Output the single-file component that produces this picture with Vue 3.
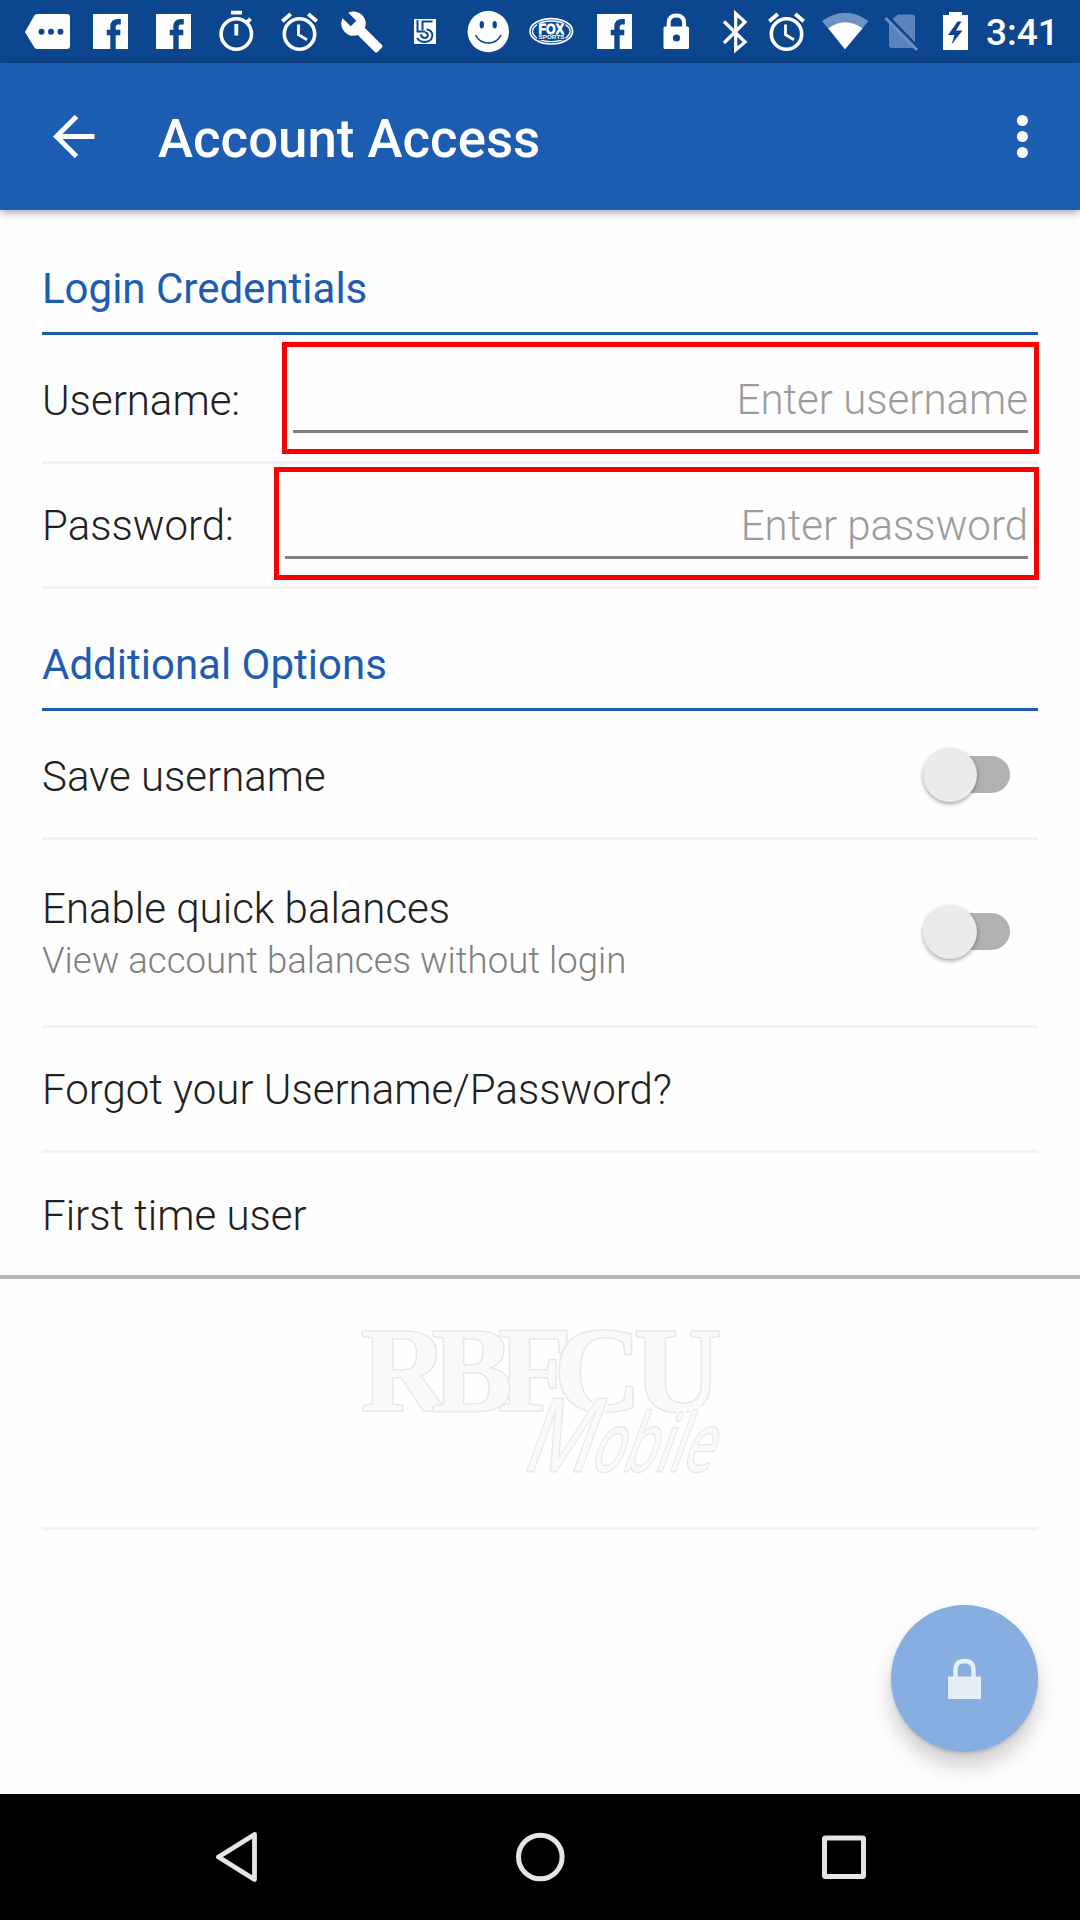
<script setup>
import { ref } from 'vue'

const username = ref('')
const password = ref('')
</script>

<template>
  <div class="screen">
    <header class="status">
      <svg viewBox="20 0 60 63" width="60" height="63">
        <path d="M37 14H67q3 0 3 3V46q0 3-3 3H37q-2 0-3-2L25 32l9-16q1-2 3-2z" fill="#fff" />
        <g fill="#0c468f"><circle cx="41.5" cy="31.7" r="3" /><circle cx="51" cy="31.7" r="3" /><circle cx="60.5" cy="31.7" r="3" /></g>
      </svg>
      <svg viewBox="80 0 62 63" width="62" height="63">
        <path d="M93 14h35v35H93z" fill="#fff" />
        <path d="M113 49V27q0-5.300 5-5.300h2.800M106.700 32.500h13.600" fill="none" stroke="#0c468f" stroke-width="5.400" />
      </svg>
      <svg viewBox="79 0 63 63" width="63" height="63">
        <path d="M93 14h35v35H93z" fill="#fff" />
        <path d="M113 49V27q0-5.300 5-5.300h2.800M106.700 32.500h13.600" fill="none" stroke="#0c468f" stroke-width="5.400" />
      </svg>
      <svg viewBox="205 0 63 63" width="63" height="63" fill="none" stroke="#fff">
        <circle cx="236.300" cy="34" r="15.200" stroke-width="3.600" />
        <path d="M231 12.700h11M236.300 24v11.500M246.500 23l4-4.300" stroke-width="3.800" />
      </svg>
      <svg viewBox="268 0 62 63" width="62" height="63" fill="none" stroke="#fff">
        <circle cx="299.500" cy="34" r="15.200" stroke-width="3.600" />
        <path d="M282.300 21.300l8.500-7.300M316.700 21.300l-8.500-7.300" stroke-width="3.800" />
        <path d="M298.500 24.500v10.300l8.500 5" stroke-width="2.800" />
      </svg>
      <svg viewBox="330 0 70 63" width="70" height="63">
        <path transform="translate(339.500 9.500) scale(1.870)" d="M22.700 19l-9.100-9.100c.9-2.300.4-5-1.500-6.900-2-2-5-2.400-7.400-1.300L9 6 6 9 1.600 4.700C.4 7.100.9 10.100 2.900 12.100c1.900 1.900 4.600 2.400 6.900 1.500l9.100 9.100c.4.4 1 .4 1.400 0l2.300-2.300c.5-.4.5-1.100.1-1.400z" fill="#fff" />
      </svg>
      <svg viewBox="400 0 50 63" width="50" height="63">
        <path d="M414 19h22v25h-22z" fill="#fff" />
        <path d="M432.500 21.500h-10v8.500M417.500 20v11.500h7.500M417 38q2.500 4 8 4c9 0 10-12 1.500-12.500M420.500 34.500q1.500 3.500 4 3.500c5 0 4-6 .3-5.500" fill="none" stroke="#0c468f" stroke-width="2" />
      </svg>
      <svg viewBox="450 0 70 63" width="70" height="63">
        <circle cx="488.300" cy="31.500" r="20.700" fill="#fff" />
        <g fill="#0c468f"><ellipse cx="481.800" cy="24.700" rx="2.200" ry="3.700" /><ellipse cx="494.700" cy="24.700" rx="2.200" ry="3.700" /></g>
        <path d="M475.500 35q4 8 12.800 8t12.800-8" fill="none" stroke="#0c468f" stroke-width="1.600" />
      </svg>
      <svg viewBox="520 0 65 63" width="65" height="63">
        <ellipse cx="551.300" cy="31.300" rx="21.300" ry="12.700" fill="none" stroke="#fff" stroke-width="1.700" />
        <ellipse cx="551.300" cy="31.300" rx="18.800" ry="10.300" fill="none" stroke="#fff" stroke-width="1.400" />
        <path d="M537 23.500h28.500v16.500h-28.500z" fill="#0c468f" />
        <text x="538.5" y="34" class="fox" font-size="15.500" textLength="25.500" lengthAdjust="spacingAndGlyphs">FOX</text>
        <text x="538.5" y="39" class="sports" font-size="5" textLength="26" lengthAdjust="spacingAndGlyphs">SPORTS</text>
      </svg>
      <svg viewBox="81 0 60 63" width="60" height="63">
        <path d="M93 14h35v35H93z" fill="#fff" />
        <path d="M113 49V27q0-5.300 5-5.300h2.800M106.700 32.500h13.600" fill="none" stroke="#0c468f" stroke-width="5.400" />
      </svg>
      <svg viewBox="645 0 60 63" width="60" height="63">
        <rect x="663.500" y="26.500" width="25.500" height="22.500" rx="1.500" fill="#fff" />
        <path d="M668.700 28v-5q0-7.500 7.700-7.500t7.700 7.500v5" fill="none" stroke="#fff" stroke-width="4" />
        <circle cx="676.500" cy="38" r="3.600" fill="#0c468f" />
      </svg>
      <svg viewBox="705 0 50 63" width="50" height="63">
        <path d="M724 21.500l21 20.500-9.300 8V13.500L745 22 724 43" fill="none" stroke="#fff" stroke-width="3.300" />
      </svg>
      <svg viewBox="755 0 60 63" width="60" height="63" fill="none" stroke="#fff">
        <circle cx="786.500" cy="34" r="15.200" stroke-width="3.600" />
        <path d="M769.300 21.300l8.500-7.300M803.700 21.300l-8.500-7.300" stroke-width="3.800" />
        <path d="M785.500 24.500v10.300l8.500 5" stroke-width="2.800" />
      </svg>
      <svg viewBox="815 0 60 63" width="60" height="63">
        <path d="M845 49.300L822 21q23-16.500 46.500 0z" fill="#6d91c2" />
        <path d="M845 49.300L828.300 28.300q16.700-12 34.200 0z" fill="#fff" />
      </svg>
      <svg viewBox="875 0 55 63" width="55" height="63">
        <path d="M898 14.500h14q3 0 3 3V48H892q-3 0-3-3V22z" fill="#5b84bd" />
        <path d="M888 16.500l31 32" stroke="#0c468f" stroke-width="3" />
        <path d="M885.500 18l31.500 32" stroke="#6d91c2" stroke-width="3" />
      </svg>
      <svg viewBox="930 0 50 63" width="50" height="63">
        <path d="M943 15h6v-3h13v3h6v35h-25z" fill="#fff" />
        <path d="M957.500 21.500l-9.500 13.500h6.500l-3 9.500 11-14h-6.500l5.500-9z" fill="#0c468f" />
      </svg>
      <span class="time">3:41</span>
    </header>

    <div class="appbar">
      <svg class="back" viewBox="0 0 48 50" width="48" height="50" fill="none" stroke="#fff" stroke-width="5">
        <path d="M45.500 24.500H9M27.500 4.500L7.500 24.500l20 20" />
      </svg>
      <h1>Account Access</h1>
      <svg class="more" viewBox="0 0 12 44" width="12" height="44" fill="#fff">
        <circle cx="6.400" cy="5.500" r="5.500" /><circle cx="6.400" cy="21.500" r="5.500" /><circle cx="6.400" cy="37.500" r="5.500" />
      </svg>
    </div>

    <main>
      <h2><span class="login">Login Credentials</span></h2>
      <div class="row field first">
        <label for="user">Username:</label>
        <div class="box user"><input id="user" v-model="username" placeholder="Enter username" /></div>
      </div>
      <div class="row field second">
        <label for="pass">Password:</label>
        <div class="box pass"><input id="pass" v-model="password" type="password" placeholder="Enter password" /></div>
      </div>
      <h2 class="more-options"><span>Additional Options</span></h2>
      <div class="row save">
        <span>Save username</span>
        <div class="toggle"><i></i></div>
      </div>
      <div class="row quick">
        <div class="lines">
          <span>Enable quick balances</span>
          <small>View account balances without login</small>
        </div>
        <div class="toggle"><i></i></div>
      </div>
      <div class="row link"><span>Forgot your Username/Password?</span></div>
      <div class="row link last"><span>First time user</span></div>
    </main>

    <section class="brand">
      <svg viewBox="340 1279 400 248" width="400" height="248">
        <text class="mark" x="361 432 498 554 634" y="1411" font-size="121">RBFCU</text>
        <text class="script halo" transform="translate(520 1471) skewX(-20)" x="0" y="0"><tspan class="cap" textLength="68" lengthAdjust="spacingAndGlyphs">M</tspan><tspan class="rest" textLength="122" lengthAdjust="spacingAndGlyphs">obile</tspan></text>
        <text class="script" transform="translate(520 1471) skewX(-20)" x="0" y="0"><tspan class="cap" textLength="68" lengthAdjust="spacingAndGlyphs">M</tspan><tspan class="rest" textLength="122" lengthAdjust="spacingAndGlyphs">obile</tspan></text>
      </svg>
    </section>

    <div class="space">
      <button class="fab" aria-label="Log in">
        <svg viewBox="0 0 34 42" width="34" height="42">
          <path d="M0 18.500h33v22.500H0z" fill="#e6eef8" />
          <path d="M7.500 20v-8q0-9 9-9t9 9v8" fill="none" stroke="#e6eef8" stroke-width="4.400" />
        </svg>
      </button>
    </div>

    <nav>
      <svg viewBox="0.500 0 50 56" width="50" height="56"><path d="M42 5.500v45L6 28z" fill="none" stroke="#e6e6e6" stroke-width="4.800" stroke-linejoin="round" /></svg>
      <svg viewBox="0.700 0 56 56" width="56" height="56"><circle cx="28" cy="28" r="21.800" fill="none" stroke="#e6e6e6" stroke-width="5" /></svg>
      <svg viewBox="0 0 50 56" width="50" height="56"><rect x="5.500" y="9" width="39" height="38.500" rx="1" fill="none" stroke="#e6e6e6" stroke-width="5" /></svg>
    </nav>
  </div>
</template>

<style>
body { margin: 0; background: #fefefe; }
</style>

<style scoped>
.screen {
  width: 1080px;
  height: 1920px;
  display: flex;
  flex-direction: column;
  overflow: hidden;
  background: #fefefe;
  color: #212121;
  font-family: Roboto, sans-serif;
  font-size: 42px;
  font-weight: 300;
}
.screen > * { flex: none; box-sizing: border-box; }
.status { height: 63px; padding-left: 20px; display: flex; background: #0c468f; }
.status svg { flex: none; display: block; }
.time { margin-left: 6px; color: #fff; font-size: 37px; line-height: 65px; font-weight: 500; }
.fox, .sports { fill: #fff; font-family: "Liberation Sans", sans-serif; font-weight: 700; }
.fox { stroke: #fff; stroke-width: .8px; }
.appbar {
  height: 147px;
  display: flex;
  align-items: center;
  padding: 0 52px 0 49px;
  background: #1c5db1;
  box-shadow: 0 2px 9px rgba(0, 0, 0, .4);
  z-index: 1;
}
h1 { margin: 4px auto 0 61px; color: #fff; font-size: 52.800px; line-height: 60px; font-weight: 500; }
main { padding: 0 42px; height: 1069px; border-bottom: 4px solid #b4b6b5; }
h2 {
  margin: 0;
  height: 125px;
  box-sizing: border-box;
  padding-top: 54px;
  border-bottom: 3px solid #1c5db1;
  color: #1c5db1;
  font-size: 42px;
  line-height: 49px;
  font-weight: 400;
}
.row {
  height: 129px;
  box-sizing: border-box;
  display: flex;
  align-items: center;
  justify-content: space-between;
  border-bottom: 3px solid #f3f3f3;
  line-height: 50px;
}
.first label { padding-top: 6px; }
.second { height: 125px; align-items: flex-start; padding-top: 3px; }
.second label { padding-top: 34px; }
.box {
  box-sizing: border-box;
  height: 112px;
  margin-right: -1px;
  padding: 29px 6px 0;
  border: 5px solid #fb0000;
}
.user { width: 757px; }
.pass { width: 765px; height: 113px; }
.pass input { height: 58px; }
input {
  display: block;
  box-sizing: border-box;
  width: 100%;
  height: 57px;
  padding: 0 0 7px;
  border: 0;
  border-bottom: 3px solid #808080;
  outline: 0;
  background: none;
  text-align: right;
  font: 300 42px/46px Roboto, sans-serif;
}
input::placeholder { color: #9c9c9c; opacity: 1; }
.more-options { height: 122px; padding-top: 51px; }
.save > span { padding-top: 5px; }
.quick { height: 188px; }
.lines { display: flex; flex-direction: column; padding-top: 5px; }
small { color: #808080; font-size: 36.600px; line-height: 53px; }
.link { height: 125px; }
.link:not(.last) > span { padding-top: 2px; }
.last { border: 0; }
.toggle {
  width: 73px;
  height: 37px;
  margin-right: 28.500px;
  border-radius: 19px;
  background: #b1b1b1;
  display: flex;
  align-items: center;
}
.save .toggle { margin-top: 1px; }
.quick .toggle { margin-bottom: 2px; }
.toggle i {
  flex: none;
  width: 54px;
  height: 54px;
  margin-left: -14px;
  border-radius: 50%;
  background: #ebebeb;
  box-shadow: 0 2px 4px rgba(0, 0, 0, .35);
}
.brand { height: 251px; margin: 0 42px; border-bottom: 3px solid #f2f2f2; display: flex; justify-content: center; }
.brand svg { overflow: visible; }
.mark, .script { fill: #f9f9f9; stroke: #e7e7e7; stroke-width: 3px; paint-order: stroke; stroke-linejoin: round; }
.mark { font-family: "Liberation Serif", serif; font-weight: 700; }
.script { font-family: "Open Sans", sans-serif; font-weight: 400; }
.cap { font-size: 101px; }
.rest { font-size: 80px; }
.halo { stroke: #fefefe; stroke-width: 8px; }
.space { height: 264px; display: flex; justify-content: flex-end; padding: 75px 42px 0 0; }
.fab {
  width: 147px;
  height: 147px;
  padding: 0;
  border: 0;
  border-radius: 50%;
  background: #87aee0;
  box-shadow: 0 14px 22px rgba(0, 0, 0, .2), 0 2px 3px rgba(0, 0, 0, .12);
  display: flex;
  align-items: center;
  justify-content: center;
}
nav { height: 126px; background: #000; display: flex; align-items: center; justify-content: space-between; padding: 0 211px 0 213px; }
</style>
